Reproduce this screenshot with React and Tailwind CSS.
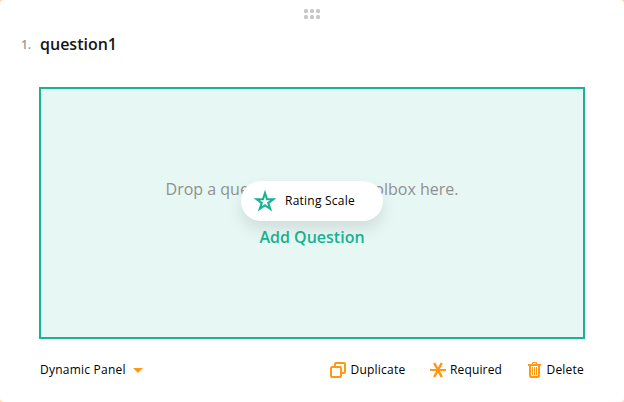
import React from "react";

function DragHandle() {
  return (
    <div className="grid grid-cols-3 content-start gap-[2px] pt-[9px]">
      {[0, 1, 2, 3, 4, 5].map((i) => (
        <span key={i} className="h-1 w-1 rounded-[1.5px] bg-[#c6c6c6]" />
      ))}
    </div>
  );
}

function StarIcon() {
  return (
    <svg width="24" height="24" viewBox="0 0 24 24" className="shrink-0">
      <path
        fillRule="evenodd"
        fill="#19b394"
        d="M12 .7 14.8 9.2H23.5L16.5 14.4 19.2 22.6 12 17.5 4.8 22.6 7.5 14.4.5 9.2H9.2ZM12 7.2 10.8 11.2H6.9L10 13.6 8.8 17.3 12 15 15.2 17.3 14 13.6 17.1 11.2H13.2Z"
      />
    </svg>
  );
}

function DuplicateIcon() {
  return (
    <svg width="16" height="16" viewBox="0 0 16 16" fill="none" stroke="#ff9814" strokeWidth="2">
      <rect x="1" y="5" width="10" height="10" rx="1" />
      <path d="M5 5V2a1 1 0 0 1 1-1h8a1 1 0 0 1 1 1v8a1 1 0 0 1-1 1h-3" />
    </svg>
  );
}

function RequiredIcon() {
  return (
    <svg width="16" height="16" viewBox="0 0 16 16" fill="none" stroke="#ff9814" strokeWidth="2.5">
      <path strokeWidth="2" d="M0 8H16" />
      <path d="M4.2 1 11.8 15M11.8 1 4.2 15" />
    </svg>
  );
}

function DeleteIcon() {
  return (
    <svg width="13" height="16" viewBox="0 0 13 16" fill="none" stroke="#ff9814">
      <path d="M4.5 2.5V.5H8.5V2.5" />
      <path strokeWidth="2" d="M0 3H13" />
      <path strokeWidth="2" d="M2 3V14a1 1 0 0 0 1 1h7a1 1 0 0 0 1-1V3" />
      <path d="M4.5 5V13M6.5 5V13M8.5 5V13" />
    </svg>
  );
}

function Action({ icon, label, className }) {
  return (
    <div className={`flex items-center ${className}`}>
      {icon}
      <span className="whitespace-nowrap">{label}</span>
    </div>
  );
}

export default function App() {
  return (
    <div className="h-[402px] w-[624px] overflow-hidden bg-[#ffd9a8] font-['Open_Sans','Noto_Sans',sans-serif] text-black">
      <div className="flex h-full flex-col rounded-[4px] bg-white">
        <div className="flex h-[33px] justify-center">
          <DragHandle />
        </div>
        <div className="flex h-[54px] items-start pl-[21px]">
          <span className="w-[19px] pt-[3px] text-xs leading-[18px] font-semibold text-[#9a9a9a]">1.</span>
          <h1 className="text-base leading-[22px] font-semibold text-[#161616]">question1</h1>
        </div>
        <div className="relative mx-[39px] flex h-[252px] flex-col items-center border-2 border-[#19b394] bg-[#e7f7f3] pt-[88px]">
          <p className="text-base leading-6 text-[#909090]">Drop a question from the toolbox here.</p>
          <button className="mt-6 text-base leading-6 font-semibold text-[#19b394]">Add Question</button>
          <div className="absolute top-[92px] left-[200px] flex h-10 w-[142px] items-center rounded-full bg-white pl-3 shadow-[0_8px_16px_rgba(0,0,0,0.1)]">
            <StarIcon />
            <span className="ml-2 text-xs tracking-[0.23px]">Rating Scale</span>
          </div>
        </div>
        <div className="flex h-[62px] items-center pl-10 text-xs">
          <div className="flex w-[290px] items-center">
            <span className="w-[93px] tracking-[0.23px]">Dynamic Panel</span>
            <svg width="10" height="5" viewBox="0 0 10 5" className="mt-px">
              <path d="M0 0H10L5 5Z" fill="#ff9814" />
            </svg>
          </div>
          <Action icon={<DuplicateIcon />} label="Duplicate" className="w-[100px] gap-[4.5px] tracking-[0.22px]" />
          <Action icon={<RequiredIcon />} label="Required" className="w-[98px] gap-1 tracking-[0.15px]" />
          <Action icon={<DeleteIcon />} label="Delete" className="gap-[5.5px] tracking-[0.2px]" />
        </div>
      </div>
    </div>
  );
}
